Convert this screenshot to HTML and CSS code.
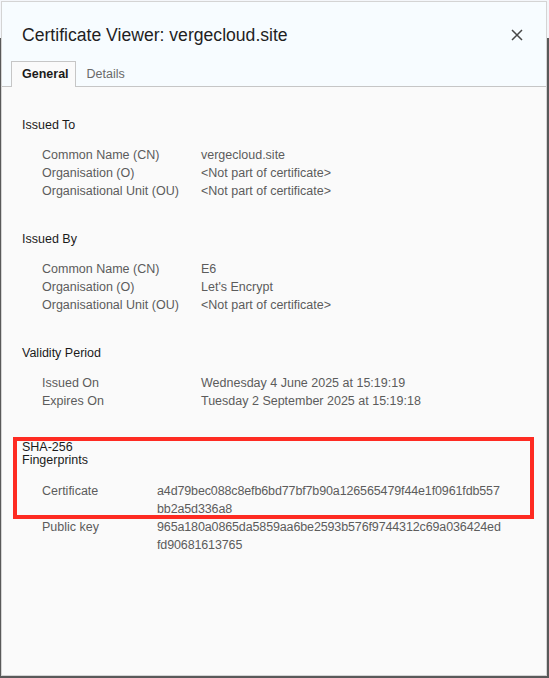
FILE: index.html
```html
<!DOCTYPE html>
<html lang="en">
<head>
    <meta charset="UTF-8">
    <meta name="viewport" content="width=device-width, initial-scale=1.0">
    <title>Certificate Viewer: vergecloud.site</title>
    <link rel="stylesheet" href="styles.css">
</head>
<body>
    <div class="dialog">
        <div class="dialog-header">
            <div class="title-row">
                <h1 class="title">Certificate Viewer: vergecloud.site</h1>
                <button class="close-btn" aria-label="Close">
                    <svg width="12" height="12" viewBox="0 0 12 12">
                        <path d="M1 1L11 11M11 1L1 11" stroke="#474747" stroke-width="1.5" fill="none"/>
                    </svg>
                </button>
            </div>
            <div class="tabs">
                <div class="tab active">General</div>
                <div class="tab">Details</div>
            </div>
        </div>

        <div class="dialog-body">
            <div class="section">
                <h2 class="section-title">Issued To</h2>
                <div class="fields wide">
                    <span class="label">Common Name (CN)</span>
                    <span class="value">vergecloud.site</span>
                    <span class="label">Organisation (O)</span>
                    <span class="value">&lt;Not part of certificate&gt;</span>
                    <span class="label">Organisational Unit (OU)</span>
                    <span class="value">&lt;Not part of certificate&gt;</span>
                </div>
            </div>

            <div class="section">
                <h2 class="section-title">Issued By</h2>
                <div class="fields wide">
                    <span class="label">Common Name (CN)</span>
                    <span class="value">E6</span>
                    <span class="label">Organisation (O)</span>
                    <span class="value">Let's Encrypt</span>
                    <span class="label">Organisational Unit (OU)</span>
                    <span class="value">&lt;Not part of certificate&gt;</span>
                </div>
            </div>

            <div class="section">
                <h2 class="section-title">Validity Period</h2>
                <div class="fields wide">
                    <span class="label">Issued On</span>
                    <span class="value">Wednesday 4 June 2025 at 15:19:19</span>
                    <span class="label">Expires On</span>
                    <span class="value">Tuesday 2 September 2025 at 15:19:18</span>
                </div>
            </div>

            <div class="section fingerprints">
                <div class="highlight">
                    <h2 class="section-title narrow-title">SHA-256<br>Fingerprints</h2>
                    <div class="fields narrow">
                        <span class="label">Certificate</span>
                        <span class="value hash">a4d79bec088c8efb6bd77bf7b90a126565479f44e1f0961fdb557<br>bb2a5d336a8</span>
                    </div>
                </div>
                <div class="fields narrow">
                    <span class="label">Public key</span>
                    <span class="value hash">965a180a0865da5859aa6be2593b576f9744312c69a036424ed<br>fd90681613765</span>
                </div>
            </div>
        </div>
    </div>
</body>
</html>
```

FILE: styles.css
```css
html, body {
    height: 100%;
}
body {
    margin: 0;
    padding: 2px 3px 3px 2px;
    box-sizing: border-box;
    background: linear-gradient(#f4f6fa 0, #f4f6fa 38px, #595959 38px);
    font-family: "Liberation Sans", Arial, sans-serif;
}
.dialog {
    height: 100%;
    display: flex;
    flex-direction: column;
    background-color: #fafafa;
    box-shadow: 0 0 0 1px #d4d4d4;
}
.dialog-header {
    background-color: #f7fcff;
    padding: 21px 22px 0 9px;
    border-bottom: 1px solid #c6c6c6;
}
.title-row {
    display: flex;
    align-items: center;
    justify-content: space-between;
    padding-left: 11px;
}
.title {
    margin: 0;
    font-size: 17.6px;
    line-height: 24px;
    font-weight: normal;
    color: #1f1f1f;
}
.close-btn {
    border: none;
    background: none;
    padding: 0;
    width: 12px;
    height: 12px;
    margin-right: 1px;
    margin-top: -1px;
    display: flex;
}
.tabs {
    display: flex;
    margin-top: 14px;
    margin-bottom: -1px;
}
.tab {
    font-size: 12.5px;
    line-height: 24px;
    height: 24px;
    padding: 0 10px;
    color: #6a6a6a;
    border: 1px solid transparent;
    border-bottom: none;
}
.tab.active {
    color: #1a1a1a;
    font-weight: bold;
    background-color: #fafafa;
    border-color: #c6c6c6;
    height: 25px;
    padding: 0 6px 0 10px;
}
.dialog-body {
    padding: 29px 22px 0 20px;
    font-size: 12.5px;
}
.section {
    margin-bottom: 30px;
}
.section-title {
    margin: 0;
    font-size: 12.5px;
    line-height: 18px;
    font-weight: normal;
    color: #1a1a1a;
}
.fields {
    display: grid;
    margin-top: 12px;
    padding-left: 20px;
    line-height: 18px;
    color: #5c5c5c;
}
.fields.wide {
    grid-template-columns: 159px 1fr;
}
.fields.narrow {
    grid-template-columns: 115px 1fr;
}
.hash {
    letter-spacing: -0.13px;
}
.fingerprints .narrow-title {
    line-height: 13px;
    padding-top: 1px;
}
.fingerprints .fields {
    margin-top: 0;
}
.highlight {
    position: relative;
}
.highlight .fields {
    margin-top: 15px;
}
.highlight::after {
    content: "";
    position: absolute;
    top: -3px;
    bottom: -1px;
    left: -9px;
    right: -10px;
    border: 4px solid #fe2b22;
    pointer-events: none;
}
```
